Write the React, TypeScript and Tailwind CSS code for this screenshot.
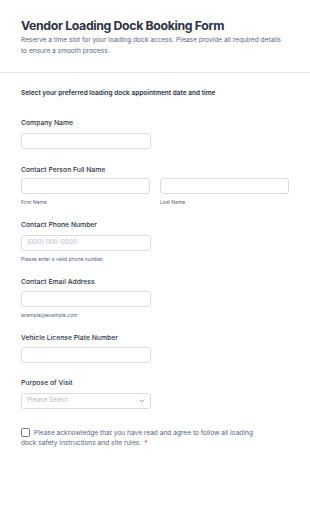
const Label = ({ children }: { children: React.ReactNode }) => (
  <div className="text-[6.8px] font-medium text-[#2c3345] leading-[10px]">
    {children}
  </div>
);

const Input = ({ placeholder, wide }: { placeholder?: string; wide?: boolean }) => (
  <div
    className={
      "h-[16px] rounded-[3px] border border-[#d8dbe3] bg-white px-[5px] flex items-center text-[6.4px] text-[#b5bac6] " +
      (wide ? "w-full" : "w-[130px]")
    }
  >
    {placeholder}
  </div>
);

const Hint = ({ children }: { children: React.ReactNode }) => (
  <div className="text-[5px] text-[#57647e] leading-[7px] mt-[5px]">{children}</div>
);

export default function App() {
  return (
    <div
      className="w-[310px] h-[515px] bg-white overflow-hidden"
      style={{ fontFamily: "Inter, 'Noto Sans', sans-serif" }}
    >
      <header className="px-[21px] pt-[17px] pb-[15px] border-b border-[#e4e6ec]">
        <h1 className="text-[12.3px] font-bold tracking-[-0.35px] text-[#2c3345] leading-[17px]">
          Vendor Loading Dock Booking Form
        </h1>
        <p className="w-[266px] text-[6.6px] text-[#57647e] leading-[11px] mt-[1px]">
          Reserve a time slot for your loading dock access. Please provide all required details
          to ensure a smooth process.
        </p>
      </header>

      <main className="px-[21px] pt-[15px]">
        <div className="text-[6.5px] font-semibold text-[#2c3345] leading-[10px]">
          Select your preferred loading dock appointment date and time
        </div>

        <section className="mt-[20px]">
          <Label>Company Name</Label>
          <div className="mt-[5px]">
            <Input />
          </div>
        </section>

        <section className="mt-[16px]">
          <Label>Contact Person Full Name</Label>
          <div className="mt-[3px] grid grid-cols-2 gap-[10px]">
            <div>
              <Input wide />
              <Hint>First Name</Hint>
            </div>
            <div>
              <Input wide />
              <Hint>Last Name</Hint>
            </div>
          </div>
        </section>

        <section className="mt-[14px]">
          <Label>Contact Phone Number</Label>
          <div className="mt-[5px]">
            <Input placeholder="(000) 000-0000" />
          </div>
          <Hint>Please enter a valid phone number.</Hint>
        </section>

        <section className="mt-[14px]">
          <Label>Contact Email Address</Label>
          <div className="mt-[4px]">
            <Input />
          </div>
          <Hint>example@example.com</Hint>
        </section>

        <section className="mt-[14px]">
          <Label>Vehicle License Plate Number</Label>
          <div className="mt-[4px]">
            <Input />
          </div>
        </section>

        <section className="mt-[15px]">
          <Label>Purpose of Visit</Label>
          <div className="mt-[5px] h-[16px] w-[130px] rounded-[3px] border border-[#d8dbe3] bg-white pl-[5px] pr-[5px] flex items-center justify-between text-[6.4px] text-[#b5bac6]">
            <span>Please Select</span>
            <svg width="6" height="4" viewBox="0 0 6 4" fill="none">
              <path d="M1 1l2 2 2-2" stroke="#8d93a3" strokeWidth="0.9" strokeLinecap="round" strokeLinejoin="round" />
            </svg>
          </div>
        </section>

        <section className="mt-[19px] w-[238px]">
          <p className="text-[6.6px] text-[#57647e] leading-[10px]">
            <span className="inline-block w-[9px] h-[9px] border border-[#6f7685] rounded-[1.5px] align-[-2px] mr-[4px]" />
            Please acknowledge that you have read and agree to follow all loading dock safety
            instructions and site rules.<span className="ml-[3px] text-[#f23a3c]">*</span>
          </p>
        </section>
      </main>
    </div>
  );
}
